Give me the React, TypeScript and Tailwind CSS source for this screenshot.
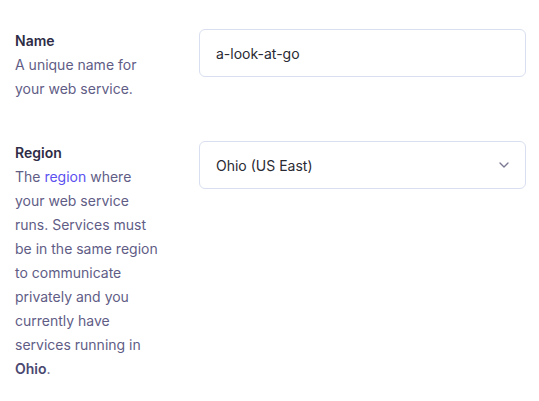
import { ChevronDown } from "lucide-react";

function Field({
  label,
  children,
  control,
}: {
  label: string;
  children: React.ReactNode;
  control: React.ReactNode;
}) {
  return (
    <div className="flex items-start">
      <div className="w-[160px] shrink-0 text-[14px] leading-6">
        <div className="font-semibold text-[#2e2c46]">{label}</div>
        <p className="text-[#5f5d86]">{children}</p>
      </div>
      <div className="ml-[24px] w-[327px]">{control}</div>
    </div>
  );
}

export default function App() {
  return (
    <div
      className="min-h-[401px] w-full bg-white pl-[15px] pt-[29px]"
      style={{ fontFamily: "Inter, 'Noto Sans', sans-serif" }}
    >
      <div className="flex flex-col gap-10">
        <Field
          label="Name"
          control={
            <div className="flex h-12 items-center rounded-md border border-[#d9dff0] px-4 text-[14px] text-[#2a2a33]">
              a-look-at-go
            </div>
          }
        >
          A unique name for
          <br />
          your web service.
        </Field>
        <Field
          label="Region"
          control={
            <div className="flex h-12 items-center justify-between rounded-md border border-[#d9dff0] pl-4 pr-[13px] text-[14px] text-[#2a2a33]">
              <span>Ohio (US East)</span>
              <ChevronDown className="h-4 w-4 text-[#7a7892]" strokeWidth={2} />
            </div>
          }
        >
          The <a className="text-[#5b50f0]">region</a> where
          <br />
          your web service
          <br />
          runs. Services must
          <br />
          be in the same region
          <br />
          to communicate
          <br />
          privately and you
          <br />
          currently have
          <br />
          services running in
          <br />
          <strong className="font-semibold text-[#4a4870]">Ohio</strong>.
        </Field>
      </div>
    </div>
  );
}
